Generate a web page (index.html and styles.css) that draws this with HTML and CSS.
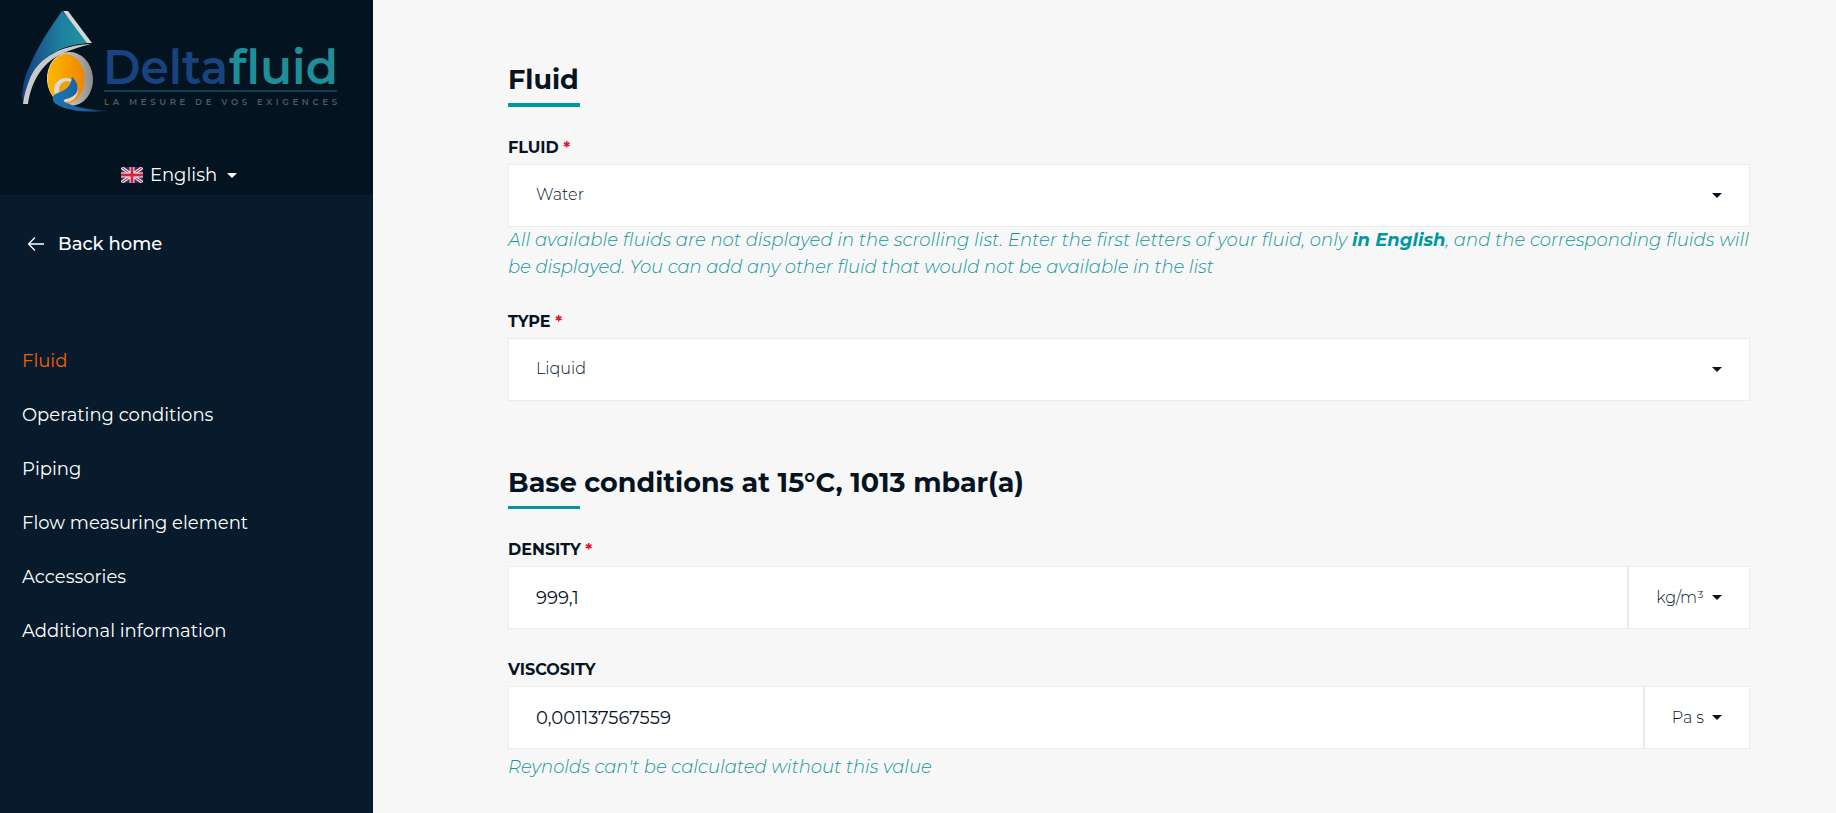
FILE: index.html
```html
<!DOCTYPE html>
<html lang="en">
<head>
<meta charset="utf-8">
<title>Deltafluid</title>
<link rel="stylesheet" href="styles.css">
</head>
<body>
<div class="app">
  <aside class="sidebar">
    <header class="brand">
      <svg class="logo" width="374" height="125" viewBox="0 0 374 125" aria-label="Deltafluid">
        <defs>
          <linearGradient id="sail" x1="0" y1="0" x2="1" y2="0"><stop offset="0" stop-color="#153f80"/><stop offset=".55" stop-color="#1c7fa0"/><stop offset="1" stop-color="#239a9e"/></linearGradient>
          <linearGradient id="orange" x1="0" y1="0" x2="1" y2="0"><stop offset="0" stop-color="#ffb900"/><stop offset="1" stop-color="#ee8500"/></linearGradient>
          <linearGradient id="steel" x1="0" y1="0" x2="1" y2="0"><stop offset="0" stop-color="#f2f2f2"/><stop offset="1" stop-color="#8b8b8b"/></linearGradient>
          <linearGradient id="swoosh" x1="0" y1="0" x2="1" y2="0"><stop offset="0" stop-color="#1d74b4"/><stop offset=".6" stop-color="#1a5d9c"/><stop offset="1" stop-color="#0a2a48"/></linearGradient>
        </defs>
        <path d="M62 11L91 43C62 44 42 56 33 74C28 84 25 94 23 103C21 90 24 78 30 65C38 46 50 28 62 11Z" fill="url(#sail)"/>
        <path d="M63 11H68L92 43L87 43Z" fill="#d6d6d6"/>
        <path d="M23 104H28C31 82 43 60 66 52C73 49 80 47 91 44C60 45 40 58 31 76C27 85 24 95 23 104Z" fill="#c9c9c9"/>
        <ellipse cx="70" cy="79" rx="23" ry="27" fill="url(#steel)" transform="rotate(-4 70 79)"/>
        <ellipse cx="66" cy="79" rx="18.500" ry="25" fill="url(#orange)"/>
        <ellipse cx="66" cy="90" rx="12" ry="12" fill="#d9d9d9"/>
        <ellipse cx="67" cy="90" rx="8" ry="9" fill="#f0a000"/>
        <path d="M72 77C80 84 80 95 69 98C64 99 61 101 67 103C78 108 92 110 108 111C88 113 66 111 56 104C50 99 53 94 60 92C66 90 71 86 72 77Z" fill="url(#swoosh)"/>
        <text class="logo-delta" x="103" y="84" textLength="125" lengthAdjust="spacingAndGlyphs">Delta</text>
        <text class="logo-fluid" x="229" y="84" textLength="109" lengthAdjust="spacingAndGlyphs">fluid</text>
        <rect x="104" y="90.500" width="233" height="1" fill="#1a6c84"/>
        <text class="logo-tag" x="104" y="105" textLength="233">LA MESURE DE VOS EXIGENCES</text>
      </svg>
      <div class="lang">
        <svg class="flag" width="22" height="16" viewBox="0 0 60 40" preserveAspectRatio="none">
          <rect width="60" height="40" rx="2" fill="#26336b"/>
          <path d="M0 0L60 40M60 0L0 40" stroke="#fff" stroke-width="8"/>
          <path d="M0 0L60 40M60 0L0 40" stroke="#d6233f" stroke-width="3"/>
          <path d="M30 0V40M0 20H60" stroke="#fff" stroke-width="13"/>
          <path d="M30 0V40M0 20H60" stroke="#d6233f" stroke-width="8"/>
        </svg>
        <span>English</span>
        <i class="caret caret-light"></i>
      </div>
    </header>
    <a class="back">
      <svg width="18" height="16" viewBox="0 0 18 16" fill="none" stroke="#fff" stroke-width="1.300"><path d="M17 8H1.500M8 1.500L1.500 8L8 14.500"/></svg>
      <span>Back home</span>
    </a>
    <nav class="nav">
      <a class="nav-item active">Fluid</a>
      <a class="nav-item">Operating conditions</a>
      <a class="nav-item">Piping</a>
      <a class="nav-item">Flow measuring element</a>
      <a class="nav-item">Accessories</a>
      <a class="nav-item">Additional information</a>
    </nav>
  </aside>
  <main class="content">
    <h2 class="title">Fluid</h2>
    <div class="label">FLUID <em>*</em></div>
    <div class="field"><span class="value small">Water</span><i class="caret"></i></div>
    <p class="note"><span class="loose">All available fluids are not displayed in the scrolling list. Enter the first letters of your fluid, only <b>in English</b>, and the corresponding fluids will</span> <span class="tight">be displayed. You can add any other fluid that would not be available in the list</span></p>
    <div class="label">TYPE <em>*</em></div>
    <div class="field"><span class="value small">Liquid</span><i class="caret"></i></div>
    <h2 class="title title-second">Base conditions at 15°C, 1013 mbar(a)</h2>
    <div class="label">DENSITY <em>*</em></div>
    <div class="group">
      <div class="field grow"><span class="value">999,1</span></div>
      <div class="unit"><span>kg/m³</span><i class="caret"></i></div>
    </div>
    <div class="label">VISCOSITY</div>
    <div class="group">
      <div class="field grow"><span class="value">0,001137567559</span></div>
      <div class="unit"><span>Pa s</span><i class="caret"></i></div>
    </div>
    <p class="note note-last">Reynolds can't be calculated without this value</p>
  </main>
</div>
</body>
</html>
```
FILE: styles.css
```css
* { box-sizing: border-box; }
html, body { margin: 0; height: 100%; overflow: hidden; }
body {
  font-family: Montserrat, Inter, "Noto Sans", sans-serif;
  background: #f7f7f7;
  color: #06141f;
}
.app { display: flex; height: 813px; }
.sidebar {
  width: 373px;
  flex: none;
  background: #071b2c;
  color: #fff;
  display: flex;
  flex-direction: column;
}
.brand {
  height: 195px;
  background: #03131f;
  display: flex;
  flex-direction: column;
}
.logo { display: block; flex: none; }
.logo-delta { font: 600 47px Montserrat, Inter, sans-serif; fill: #17437f; }
.logo-fluid { font: 600 47px Montserrat, Inter, sans-serif; fill: #1e8f99; }
.logo-tag { font: 600 8.500px Montserrat, Inter, sans-serif; fill: #55585c; }
.lang {
  display: flex;
  align-items: center;
  justify-content: center;
  gap: 7px;
  margin-top: 38px;
  padding-right: 15px;
  font-size: 18px;
  font-weight: 400;
  line-height: 24px;
}
.flag { display: block; }
.caret {
  display: inline-block;
  width: 0;
  height: 0;
  border-left: 5px solid transparent;
  border-right: 5px solid transparent;
  border-top: 5px solid #06141f;
}
.caret-light { border-top-color: #fff; margin-left: 3px; }
.back {
  display: flex;
  align-items: center;
  gap: 13px;
  margin: 37px 0 0 27px;
  font-size: 18px;
  font-weight: 500;
  line-height: 24px;
}
.nav {
  display: flex;
  flex-direction: column;
  gap: 30px;
  margin: 93px 0 0 22px;
}
.nav-item {
  font-size: 18px;
  font-weight: 400;
  line-height: 24px;
}
.active { color: #f45d0a; }
.content {
  flex: 1;
  padding: 60px 86px 0 135px;
  min-width: 0;
}
.title {
  display: table;
  margin: 0;
  padding-top: 1px;
  font-size: 27px;
  font-weight: 700;
  line-height: 38px;
}
.title::after {
  content: "";
  display: block;
  width: 72px;
  height: 4px;
  margin-top: 4px;
  background: #0097a0;
}
.label {
  margin: 30px 0 6px;
  padding-top: 1px;
  font-size: 16px;
  font-weight: 700;
  line-height: 20px;
}
.label em { color: #e0142c; font-style: normal; }
.field {
  height: 63px;
  background: #fff;
  border: 1px solid #ececec;
  display: flex;
  align-items: center;
  justify-content: space-between;
  padding: 0 27px;
}
.value { font-size: 18px; font-weight: 400; }
.small { font-size: 16px; font-weight: 300; padding-bottom: 2px; }
.note {
  margin: 0;
  font-size: 18px;
  font-style: italic;
  font-weight: 300;
  line-height: 27px;
  color: #0f96a0;
}
.note b { font-weight: 700; color: #0097a0; }
.loose { letter-spacing: .05px; }
.tight { letter-spacing: -.05px; }
.note-last { margin-top: 5px; }
.title-second { margin-top: 62px; }
.title-second::after { height: 3px; }
.group { display: flex; }
.grow { flex: 1; min-width: 0; }
.unit {
  height: 63px;
  background: #fff;
  border: 1px solid #ececec;
  display: flex;
  align-items: center;
  gap: 8px;
  padding: 0 27px;
  font-size: 16px;
  font-weight: 300;
  white-space: nowrap;
}
```
